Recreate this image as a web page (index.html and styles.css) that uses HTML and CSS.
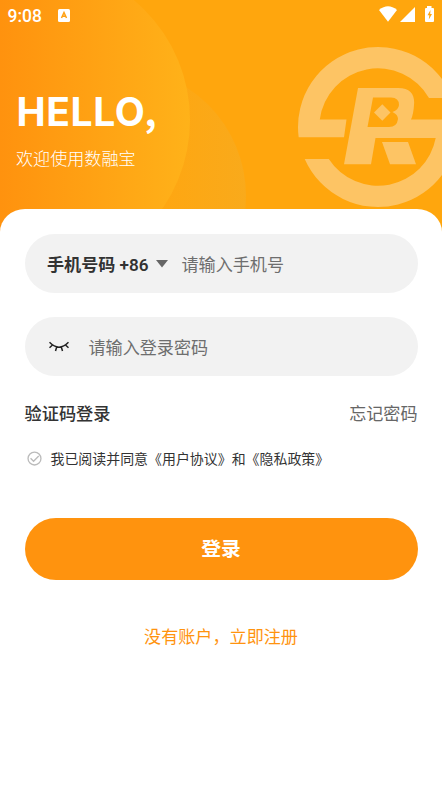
FILE: index.html
```html
<!DOCTYPE html>
<html lang="zh-CN">
<head>
<meta charset="utf-8">
<title>登录</title>
<link rel="stylesheet" href="styles.css">
</head>
<body>
<header class="hero">
  <svg class="hero-art" viewBox="0 0 442 240" aria-hidden="true">
    <defs>
      <linearGradient id="g1" gradientUnits="userSpaceOnUse" x1="0" y1="0" x2="190" y2="0"><stop offset="0" stop-color="#ff920e"/><stop offset="1" stop-color="#ffb219"/></linearGradient>
      <linearGradient id="g2" gradientUnits="userSpaceOnUse" x1="150" y1="0" x2="246" y2="0"><stop offset="0" stop-color="#ffa610"/><stop offset="1" stop-color="#f9aa1b"/></linearGradient>
    </defs>
    <circle cx="117" cy="196" r="129" fill="url(#g2)"/>
    <circle cx="34" cy="120" r="156" fill="url(#g1)"/>
    <g fill="#fdc464">
      <path d="M298.670 137.300A80 80 0 0 1 452.560 98H429A58.700 58.700 0 0 0 319.800 119.500H346.500L344 137.300Z"/>
      <path d="M304.700 159H328.800A58.700 58.700 0 0 0 435.700 138H375.500L371 164.300H344L358 88H398C411 88 415 95 414 105Q413.500 114 411 119.500H457.650A80 80 0 0 1 304.700 159Z"/>
      <path d="M382 142H408L416 164.300H390Z"/>
    </g>
    <path fill="#ffa60d" d="M373 97.500H391Q399 97.500 399 105Q398.500 110 392.500 112Q398 114.500 398 119Q397 127 389 127H367.500Z"/>
    <path fill="#fdc464" d="M382.300 104.300L390.500 112.500L382.300 120.700L374 112.500Z"/>
  </svg>
  <div class="status">
    <span class="time">9:08</span>
    <svg class="app" viewBox="0 0 12 13"><rect width="12" height="13" rx="1.500" fill="#fff"/><path d="M3.500 9L6 3.500L8.500 9M4.500 7.300H7.500" fill="none" stroke="#ffa013" stroke-width="1.500"/></svg>
    <svg class="signals" viewBox="0 0 58 18">
      <g fill="#fff"><path d="M3 4Q12 -3.500 21 4L12 15.700Z"/><path d="M24 16L39 1V16Z"/><path d="M49 2H51V0H55.500V2H57Q58 2 58 3V15Q58 16 57 16H50Q49 16 49 15V3Q49 2 50 2Z"/></g>
      <path d="M54.500 4L51.500 9.300H53.300L52.800 13.500L56 7.900H54.200Z" fill="#ffa60d"/>
    </svg>
  </div>
  <h1>HELLO<span class="comma">,</span></h1>
  <p class="welcome">欢迎使用数融宝</p>
</header>
<main class="card">
  <div class="field">
    <span class="code">手机号码 +86</span>
    <svg class="caret" viewBox="0 0 12 8"><path d="M0 0H12L6 7.500Z" fill="#666"/></svg>
    <span class="hint">请输入手机号</span>
  </div>
  <div class="field second">
    <svg class="eye" viewBox="0 0 20 12"><path d="M.500 1.300Q10 11 19.500 1.300M3.500 4L.500 6.800M16.500 4L19.500 6.800M7.700 6L6.500 10M12.300 6L13.500 10" fill="none" stroke="#222" stroke-width="1.500"/></svg>
    <span class="hint">请输入登录密码</span>
  </div>
  <div class="links"><strong>验证码登录</strong><span>忘记密码</span></div>
  <div class="agree">
    <svg class="check" viewBox="0 0 16 16"><circle cx="8" cy="8" r="6.900" fill="none" stroke="#bbb" stroke-width="1.400"/><path d="M3.800 7.800L7 11L12.500 5.300" fill="none" stroke="#bbb" stroke-width="1.400"/></svg>
    <span>我已阅读并同意《用户协议》和《隐私政策》</span>
  </div>
  <div class="submit">登录</div>
  <div class="register">没有账户，立即注册</div>
</main>
</body>
</html>
```
FILE: styles.css
```css
* { box-sizing: border-box; }
body {
  margin: 0;
  height: 787px;
  overflow: hidden;
  background: #fff;
  color: #333;
  font-family: Roboto, "Noto Sans CJK SC", sans-serif;
  font-size: 17.1px;
}
svg { display: block; flex: none; }
.hero {
  position: relative;
  height: 240px;
  background: #ffa60d;
  color: #fff;
}
.hero-art { position: absolute; inset: 0; width: 442px; height: 240px; }
.status {
  position: relative;
  display: flex;
  align-items: flex-start;
  height: 89px;
  padding: 6px 8px 0 7.5px;
}
.time { width: 50.5px; font-size: 17.5px; line-height: 20px; font-weight: 500; }
.app { width: 12px; height: 13px; margin-top: 3px; }
.signals { width: 58px; height: 18px; margin-left: auto; }
h1 {
  position: relative;
  height: 46px;
  margin: 0 0 0 16.5px;
  font: 700 39px/45px Inter, sans-serif;
  letter-spacing: 0.6px;
}
.comma { margin-left: -1px; font-family: "Noto Sans CJK SC", sans-serif; font-size: 37px; line-height: 1; }
.welcome { position: relative; margin: 11px 0 0 16px; line-height: 26px; font-weight: 300; }
.card {
  position: relative;
  height: 578px;
  margin-top: -31px;
  padding: 25px 24.5px 0;
  border-radius: 25px 25px 0 0 / 23px 23px 0 0;
  background: #fff;
}
.field {
  display: flex;
  align-items: center;
  height: 59px;
  padding-left: 22.5px;
  border-radius: 30px;
  background: #f2f2f2;
}
.second { margin-top: 24.4px; }
.second .hint { padding-bottom: 1px; }
.code { width: 108.5px; padding-bottom: 1px; font-weight: 600; white-space: nowrap; }
.caret { width: 12px; height: 8px; margin-right: 14px; }
.hint { color: #6e6e6e; }
.eye { width: 20px; height: 12px; margin: 0 19.5px 0 2px; }
.links {
  display: flex;
  justify-content: space-between;
  margin-top: 24.6px;
  line-height: 26px;
}
.links strong { font-weight: 500; font-size: 17.2px; }
.links span { color: #666; }
.agree {
  display: flex;
  align-items: center;
  gap: 9px;
  height: 20px;
  margin: 22px 0 0 2px;
  font-size: 13.95px;
}
.agree span { padding-bottom: 1px; }
.check { width: 15px; height: 15px; }
.submit {
  height: 62px;
  margin-top: 49px;
  border-radius: 31px;
  background: #ff930e;
  color: #fff;
  font-size: 19.8px;
  line-height: 64px;
  font-weight: 600;
  text-align: center;
}
.register {
  margin-top: 44.5px;
  color: #ff930e;
  line-height: 26px;
  text-align: center;
}
```
